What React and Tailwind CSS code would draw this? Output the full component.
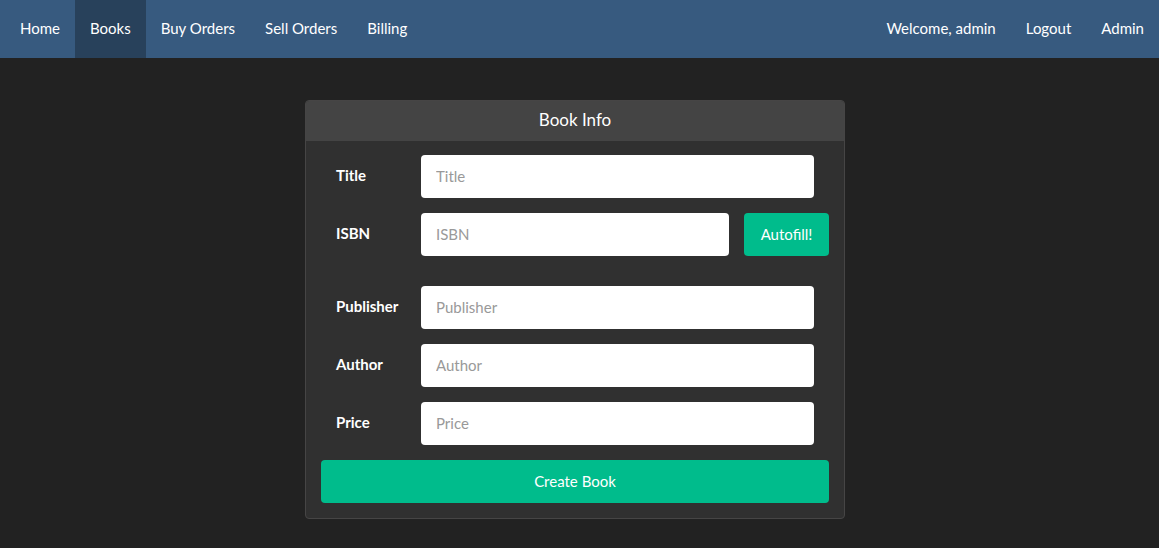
import React from 'react';

const leftLinks = ['Home', 'Books', 'Buy Orders', 'Sell Orders', 'Billing'];
const rightLinks = ['Welcome, admin', 'Logout', 'Admin'];

function Field({ label, placeholder, extra, className = '' }) {
  return (
    <div className={`flex items-center ${className}`}>
      <label className="w-[100px] pb-[2px] pl-[15px] text-[15px] font-bold text-white">{label}</label>
      <input
        placeholder={placeholder}
        className={`h-[43px] rounded-[4px] bg-white px-[15px] pb-[2px] text-[15px] text-[#464545] placeholder:text-[#999] outline-none ${extra ? 'w-[308px]' : 'w-[393px]'}`}
      />
      {extra}
    </div>
  );
}

export default function App() {
  return (
    <div className="min-h-screen bg-[#222222] text-white" style={{ fontFamily: 'Lato, "Open Sans", sans-serif' }}>
      <nav className="flex h-[58px] items-stretch justify-between bg-[#375a7f] text-[15px]">
        <ul className="flex pl-[5px]">
          {leftLinks.map((link) => (
            <li
              key={link}
              className={`flex items-center px-[15px] pb-[2px] ${link === 'Books' ? 'bg-[#28415b]' : ''}`}
            >
              {link}
            </li>
          ))}
        </ul>
        <ul className="flex">
          {rightLinks.map((link) => (
            <li key={link} className="flex items-center px-[15px] pb-[2px]">{link}</li>
          ))}
        </ul>
      </nav>

      <div className="flex justify-center pr-[9px] pt-[42px]">
        <section className="w-[540px] overflow-hidden rounded-[4px] border border-[#464545] bg-[#303030]">
          <div className="flex h-[40px] items-center justify-center bg-[#444444] pb-[2px] text-[17px]">Book Info</div>
          <div className="flex flex-col gap-[15px] px-[15px] pb-[15px] pt-[14px]">
            <Field label="Title" placeholder="Title" />
            <Field
              label="ISBN"
              placeholder="ISBN"
              extra={
                <button className="ml-[15px] h-[43px] w-[85px] rounded-[4px] bg-[#00bc8c] text-[15px] text-white">
                  Autofill!
                </button>
              }
            />
            <Field label="Publisher" placeholder="Publisher" className="mt-[15px]" />
            <Field label="Author" placeholder="Author" />
            <Field label="Price" placeholder="Price" />
            <button className="h-[43px] w-full rounded-[4px] bg-[#00bc8c] text-[15px] text-white">Create Book</button>
          </div>
        </section>
      </div>
    </div>
  );
}
